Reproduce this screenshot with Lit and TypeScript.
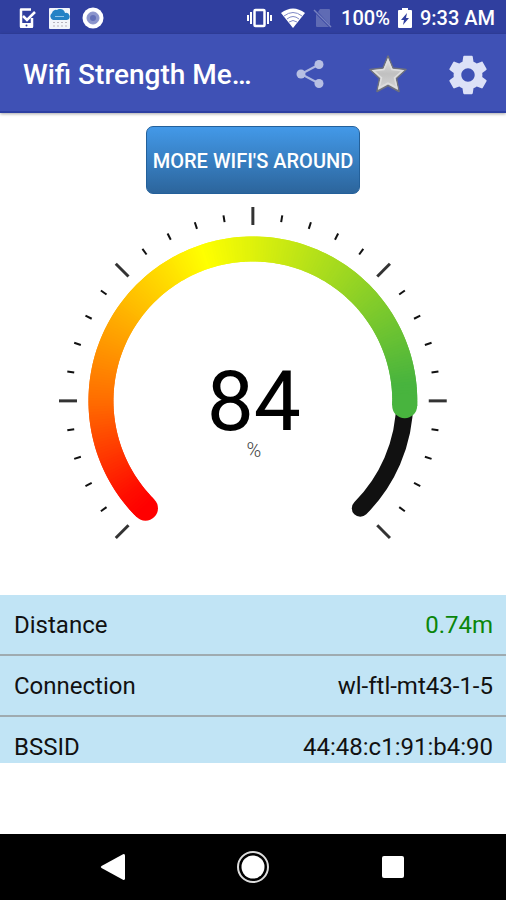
import { LitElement, html, svg, css } from "lit";
import { customElement, property } from "lit/decorators.js";

const CX = 200;
const CY = 204;
const START = 135;
const SWEEP = 270;
const RADIUS = 152;

function polar(radius: number, deg: number): [number, number] {
  const a = (deg * Math.PI) / 180;
  return [CX + radius * Math.cos(a), CY + radius * Math.sin(a)];
}

function arc(radius: number, from: number, to: number): string {
  const [x1, y1] = polar(radius, from);
  const [x2, y2] = polar(radius, to);
  const large = to - from > 180 ? 1 : 0;
  return `M${x1.toFixed(2)} ${y1.toFixed(2)}A${radius} ${radius} 0 ${large} 1 ${x2.toFixed(2)} ${y2.toFixed(2)}`;
}

const STOPS: [number, number[]][] = [
  [0, [255, 0, 0]],
  [8, [255, 14, 0]],
  [45, [255, 110, 0]],
  [116, [255, 255, 0]],
  [218, [72, 180, 62]],
  [270, [72, 180, 62]],
];

function colorAt(deg: number): string {
  let i = 1;
  while (i < STOPS.length - 1 && STOPS[i][0] < deg) i++;
  const [d0, c0] = STOPS[i - 1];
  const [d1, c1] = STOPS[i];
  const t = Math.min(1, (deg - d0) / (d1 - d0));
  return `rgb(${c0.map((c, k) => Math.round(c + (c1[k] - c) * t)).join(",")})`;
}

@customElement("signal-gauge")
export class SignalGauge extends LitElement {
  @property({ type: Number }) value = 0;

  static styles = css`
    :host { display: block; }
    .gauge { display: block; width: 100%; height: auto; }
    .track { fill: none; stroke: #111; stroke-width: 17; stroke-linecap: round; }
    .seg { fill: none; stroke-width: 25; }
    .major { stroke: #333; stroke-width: 3; }
    .minor { stroke: #111; stroke-width: 2; }
    .value { font: 84px Roboto, sans-serif; text-anchor: middle; fill: #000; }
    .unit { font: 300 20px Roboto, sans-serif; text-anchor: middle; fill: #444; }
  `;

  render() {
    const end = (SWEEP * this.value) / 100;
    const segs = [];
    for (let d = 0; d < end; d++) {
      segs.push(svg`<path class="seg" d=${arc(RADIUS, START + d, START + Math.min(end, d + 2))} stroke=${colorAt(d)}></path>`);
    }
    const ticks = [];
    for (let i = 0; i <= 30; i++) {
      const major = i % 5 === 0;
      const [x1, y1] = polar(major ? 176 : 181, START + i * 9);
      const [x2, y2] = polar(major ? 194 : 188, START + i * 9);
      ticks.push(svg`<line class=${major ? "major" : "minor"} x1=${x1} y1=${y1} x2=${x2} y2=${y2}></line>`);
    }
    const [sx, sy] = polar(RADIUS, START);
    const [ex, ey] = polar(RADIUS, START + end);
    return html`<svg class="gauge" viewBox="0 0 400 350" role="img" aria-label="Signal strength">
      ${ticks}
      <path class="track" d=${arc(RADIUS, START, START + SWEEP)}></path>
      <circle cx=${sx} cy=${sy} r="12.5" fill=${colorAt(0)}></circle>
      ${segs}
      <circle cx=${ex} cy=${ey} r="12.5" fill=${colorAt(end)}></circle>
      <text class="value" x="201" y="233">${this.value}</text>
      <text class="unit" x="201" y="260">%</text>
    </svg>`;
  }
}

@customElement("app-root")
export class AppRoot extends LitElement {
  static styles = css`
    :host {
      display: flex;
      flex-direction: column;
      min-height: 100vh;
      background: #fff;
      font-family: Roboto, sans-serif;
      color: #111;
    }
    svg { display: block; flex: none; }
    button { font: inherit; cursor: pointer; }
    .status {
      display: flex;
      align-items: center;
      height: 34px;
      box-sizing: border-box;
      padding: 2px 11px 0 17px;
      background: #303f9f;
      color: #fff;
      font-size: 20px;
      font-weight: 500;
    }
    .left { display: flex; align-items: center; gap: 12px; flex: 1; }
    .right { display: flex; align-items: center; gap: 8px; }
    .toolbar {
      display: flex;
      align-items: center;
      height: 79px;
      box-sizing: border-box;
      padding: 3px 19px 0 23px;
      background: #3f51b5;
      border-bottom: 2px solid #2c3fa2;
      box-shadow: 0 1px 3px rgba(0, 0, 0, 0.35);
    }
    .title {
      flex: 1;
      margin: 0;
      color: #fff;
      font-size: 28px;
      font-weight: 500;
      white-space: nowrap;
    }
    .actions { display: flex; gap: 36px; }
    .icon {
      display: grid;
      place-items: center;
      width: 42px;
      height: 44px;
      padding: 0;
      border: 0;
      background: none;
    }
    .content { flex: 1; display: flex; flex-direction: column; align-items: center; }
    .more {
      height: 68px;
      margin-top: 13px;
      padding: 2px 6px 0;
      border: 1px solid #23609a;
      border-radius: 7px;
      background: linear-gradient(#4399e8, #2c659c);
      color: #fff;
      font-size: 20px;
      font-weight: 500;
      white-space: nowrap;
    }
    .dial { width: 79%; margin-top: 3px; }
    .info {
      width: 100%;
      margin-top: 48px;
      border-collapse: collapse;
      background: #c1e4f5;
      font-size: 24px;
      line-height: 28px;
    }
    .info th, .info td { padding: 16px 13px 15px 14px; border-bottom: 2px solid #9fabb0; }
    .info th { text-align: left; font-weight: 400; }
    .info td { text-align: right; }
    .info .last th, .info .last td { padding-bottom: 2px; border: 0; }
    .info .good { color: #0a860a; }
    .nav {
      display: flex;
      justify-content: center;
      gap: 98px;
      height: 66px;
      align-items: center;
      background: #000;
    }
  `;

  render() {
    return html`
      <div class="status">
        <div class="left">
          <svg width="20" height="22" viewBox="0 0 20 22">
            <path fill="none" stroke="#fff" stroke-width="2.500" stroke-linejoin="round" d="M14 2.500H4v17h11V11"/>
            <path fill="none" stroke="#fff" stroke-width="2.500" d="M6 9l4 4L18 5"/>
            <path fill="#fff" d="M3 16h13v4a1 1 0 0 1-1 1H4a1 1 0 0 1-1-1z"/>
            <circle cx="9.500" cy="18.500" r="1" fill="#303f9f"/>
          </svg>
          <svg width="21" height="21" viewBox="0 0 21 21">
            <rect width="21" height="21" rx="1" fill="#f2f5fa"/>
            <path fill="#2482c5" d="M4 12a4 4 0 0 1-1-7 4 4 0 0 1 5-3 5 5 0 0 1 8 3 3.500 3.500 0 0 1 2 7z"/>
            <path stroke="#8fc4ea" d="M6 8.500h9"/>
            <path stroke="#b8b5bd" stroke-dasharray="2 2" d="M4 14.500h14M4 18h14"/>
          </svg>
          <svg width="22" height="22" viewBox="0 0 22 22">
            <circle cx="11" cy="11" r="10.500" fill="#fff"/>
            <circle cx="11" cy="11" r="6" fill="#8b95cc" stroke="#8993cd"/>
            <circle cx="11" cy="11" r="3" fill="#6370b8"/>
          </svg>
        </div>
        <div class="right">
          <svg width="27" height="20" viewBox="0 0 27 20">
            <path fill="none" stroke="#fff" stroke-width="2" d="M2 7v6M5 4v12M22 4v12M25 7v6"/>
            <rect x="8.500" y="2" width="10" height="16" rx="1" fill="none" stroke="#fff" stroke-width="2.500"/>
          </svg>
          <svg width="24" height="20" viewBox="0 0 24 20">
            <path fill="#fff" d="M12 20L0 5Q12-4 24 5z"/>
            <path fill="none" stroke="#7f89c6" d="M3 8Q12 1 21 8M6 11Q12 6 18 11M8 14Q12 11 16 14"/>
          </svg>
          <svg width="20" height="20" viewBox="0 0 20 20">
            <path fill="#5f6bb4" d="M7 1h9a1 1 0 0 1 1 1v15L5 4zM3 6l13 13H4a1 1 0 0 1-1-1z"/>
            <path stroke="#7781bf" stroke-width="1.500" d="M1 2l17 17"/>
          </svg>
          <span>100%</span>
          <svg width="14" height="20" viewBox="0 0 14 20">
            <path fill="#fff" d="M4 0h6v2h3a1 1 0 0 1 1 1v16a1 1 0 0 1-1 1H1a1 1 0 0 1-1-1V3a1 1 0 0 1 1-1h3z"/>
            <path fill="#303f9f" d="M9 5L3 12h3l-1 5 6-7H8z"/>
          </svg>
          <span>9:33 AM</span>
        </div>
      </div>
      <header class="toolbar">
        <h1 class="title">Wifi Strength Me…</h1>
        <div class="actions">
          <button class="icon" aria-label="Share">
            <svg width="28" height="30" viewBox="0 0 28 30">
              <path fill="none" stroke="#b0b9e0" stroke-width="2" d="M23 5.500L5 15l18 9.500"/>
              <g fill="#b7bfe3"><circle cx="5" cy="15" r="4.500"/><circle cx="23" cy="5.500" r="4.500"/><circle cx="23" cy="24.500" r="4.500"/></g>
            </svg>
          </button>
          <button class="icon" aria-label="Favourite">
            <svg width="38" height="38" viewBox="0 0 38 38">
              <defs><linearGradient id="star" x1="0" y1="0" x2="0" y2="1"><stop offset="0" stop-color="#e8e8e8"/><stop offset=".5" stop-color="#c0c0c0"/><stop offset="1" stop-color="#d8d8d8"/></linearGradient></defs>
              <path fill="url(#star)" stroke="#6e717d" stroke-width="1.500" stroke-linejoin="round" d="M19 1l5 12 13 1.500-9.500 9 2.500 13L19 30.500 8 36.500l2.500-13L1 14.500 14 13z"/>
              <path fill="none" stroke="#dedede" stroke-width="1.500" d="M19 5l4 9.500 10.500 1.200-8 7 2.500 10.300L19 28l-9 5 2.500-10.300-8-7L15 14.500z"/>
            </svg>
          </button>
          <button class="icon" aria-label="Settings">
            <svg width="46" height="46" viewBox="0 0 24 24">
              <path fill="#dce1f7" d="M19.430 12.980c.04-.32.07-.64.07-.98s-.03-.66-.07-.98l2.110-1.650c.19-.15.24-.42.12-.64l-2-3.460c-.12-.22-.39-.3-.61-.22l-2.490 1c-.52-.4-1.080-.73-1.690-.98l-.38-2.650C14.460 2.180 14.250 2 14 2h-4c-.25 0-.46.18-.49.42l-.38 2.650c-.61.25-1.170.59-1.690.98l-2.490-1c-.23-.09-.49 0-.61.22l-2 3.460c-.13.22-.07.49.12.64l2.110 1.650c-.04.32-.07.65-.07.98s.03.66.07.98l-2.110 1.650c-.19.15-.24.42-.12.64l2 3.460c.12.22.39.3.61.22l2.490-1c.52.4 1.080.73 1.690.98l.38 2.650c.03.24.24.42.49.42h4c.25 0 .46-.18.49-.42l.38-2.650c.61-.25 1.170-.59 1.690-.98l2.490 1c.23.09.49 0 .61-.22l2-3.460c.12-.22.07-.49-.12-.64l-2.110-1.650zM12 15.500c-1.930 0-3.500-1.570-3.500-3.500s1.570-3.500 3.500-3.500 3.500 1.570 3.500 3.500-1.570 3.500-3.500 3.500z"/>
            </svg>
          </button>
        </div>
      </header>
      <main class="content">
        <button class="more">MORE WIFI'S AROUND</button>
        <signal-gauge class="dial" .value=${84}></signal-gauge>
        <table class="info">
          <tr><th scope="row">Distance</th><td class="good">0.74m</td></tr>
          <tr><th scope="row">Connection</th><td>wl-ftl-mt43-1-5</td></tr>
          <tr class="last"><th scope="row">BSSID</th><td>44:48:c1:91:b4:90</td></tr>
        </table>
      </main>
      <nav class="nav">
        <button class="icon" aria-label="Back">
          <svg width="26" height="28" viewBox="0 0 26 28"><path fill="#fff" d="M1.500 13L23 1.200q2-.8 2 1.300v23q0 2-2 1.300L1.500 15q-1.500-1 0-2z"/></svg>
        </button>
        <button class="icon" aria-label="Home">
          <svg width="32" height="32" viewBox="0 0 32 32"><circle cx="16" cy="16" r="15" fill="none" stroke="#ddd" stroke-width="2"/><circle cx="16" cy="16" r="11.500" fill="#fff"/></svg>
        </button>
        <button class="icon" aria-label="Recent apps">
          <svg width="22" height="22" viewBox="0 0 22 22"><rect width="22" height="22" rx="2" fill="#fff"/></svg>
        </button>
      </nav>
    `;
  }
}
